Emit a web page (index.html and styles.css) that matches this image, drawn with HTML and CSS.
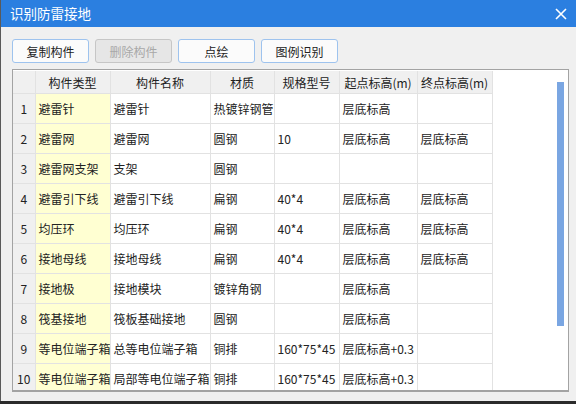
FILE: index.html
```html
<!DOCTYPE html>
<html lang="zh-CN">
<head>
  <meta charset="UTF-8">
  <title>识别防雷接地</title>
  <link rel="stylesheet" href="styles.css">
</head>
<body>
  <div class="dialog">
    <div class="titlebar">
      <span class="title">识别防雷接地</span>
      <svg class="close" width="12" height="12" viewBox="0 0 12 12">
        <path d="M1 1 L11 11 M11 1 L1 11" stroke="#fff" stroke-width="1.6"/>
      </svg>
    </div>

    <div class="content">
      <div class="toolbar">
        <button class="btn">复制构件</button>
        <button class="btn" disabled>删除构件</button>
        <button class="btn">点绘</button>
        <button class="btn">图例识别</button>
      </div>

      <div class="grid-frame">
        <table class="grid">
          <colgroup>
            <col style="width:22px">
            <col style="width:75px">
            <col style="width:100px">
            <col style="width:64px">
            <col style="width:65px">
            <col style="width:78px">
            <col style="width:75px">
          </colgroup>
          <thead>
            <tr>
              <th></th>
              <th>构件类型</th>
              <th>构件名称</th>
              <th>材质</th>
              <th>规格型号</th>
              <th>起点标高(m)</th>
              <th>终点标高(m)</th>
            </tr>
          </thead>
          <tbody>
            <tr><td class="num">1</td><td class="type">避雷针</td><td>避雷针</td><td>热镀锌钢管</td><td></td><td>层底标高</td><td></td></tr>
            <tr><td class="num">2</td><td class="type">避雷网</td><td>避雷网</td><td>圆钢</td><td>10</td><td>层底标高</td><td>层底标高</td></tr>
            <tr><td class="num">3</td><td class="type">避雷网支架</td><td>支架</td><td>圆钢</td><td></td><td></td><td></td></tr>
            <tr><td class="num">4</td><td class="type">避雷引下线</td><td>避雷引下线</td><td>扁钢</td><td>40*4</td><td>层底标高</td><td>层底标高</td></tr>
            <tr><td class="num">5</td><td class="type">均压环</td><td>均压环</td><td>扁钢</td><td>40*4</td><td>层底标高</td><td>层底标高</td></tr>
            <tr><td class="num">6</td><td class="type">接地母线</td><td>接地母线</td><td>扁钢</td><td>40*4</td><td>层底标高</td><td>层底标高</td></tr>
            <tr><td class="num">7</td><td class="type">接地极</td><td>接地模块</td><td>镀锌角钢</td><td></td><td>层底标高</td><td></td></tr>
            <tr><td class="num">8</td><td class="type">筏基接地</td><td>筏板基础接地</td><td>圆钢</td><td></td><td>层底标高</td><td></td></tr>
            <tr><td class="num">9</td><td class="type">等电位端子箱</td><td>总等电位端子箱</td><td>铜排</td><td>160*75*45</td><td>层底标高+0.3</td><td></td></tr>
            <tr><td class="num">10</td><td class="type">等电位端子箱</td><td>局部等电位端子箱</td><td>铜排</td><td>160*75*45</td><td>层底标高+0.3</td><td></td></tr>
          </tbody>
        </table>
        <div class="scroll-thumb"></div>
      </div>
    </div>
  </div>
</body>
</html>
```

FILE: styles.css
```css
body {
  margin: 0;
  background-color: #2b2b2b;
  font-family: "Noto Sans CJK SC", "Noto Sans", sans-serif;
  font-size: 12px;
  color: #222;
}
.dialog {
  width: 575px;
  height: 401px;
  background-color: #f0f0f0;
  border-left: 1px solid #5a5a5a;
  display: flex;
  flex-direction: column;
  overflow: hidden;
}
.titlebar {
  height: 27px;
  flex: none;
  background-color: #2b7fe0;
  display: flex;
  align-items: center;
  justify-content: space-between;
  padding: 0 8px 0 9px;
}
.title {
  color: #fff;
  font-size: 13.5px;
  line-height: 27px;
}
.close {
  margin-right: 1px;
}
.content {
  padding: 12px 7px 0 11px;
}
.toolbar {
  display: flex;
  gap: 6px;
  height: 24px;
}
.btn {
  width: 77px;
  height: 24px;
  padding: 0;
  font-family: inherit;
  font-size: 12px;
  color: #222;
  background-color: #fbfbfb;
  border: 1px solid #9ec3ee;
  border-radius: 3px;
}
.btn:disabled {
  color: #a8a8a8;
  background-color: #e6e6e6;
  border-color: #c6c6c6;
}
.grid-frame {
  position: relative;
  margin-top: 6px;
  height: 319px;
  background-color: #fff;
  border: 1px solid #a3a3a3;
  border-bottom-width: 2px;
  padding-top: 1px;
  overflow: hidden;
}
.grid {
  border-collapse: collapse;
  table-layout: fixed;
  width: 479px;
}
.grid th {
  height: 22px;
  padding: 0;
  font-weight: normal;
  background-color: #f0f0f0;
  border-right: 1px solid #e2e2e2;
  border-bottom: 1px solid #e2e2e2;
  text-align: center;
  white-space: nowrap;
}
.grid td {
  height: 29px;
  padding: 0 0 0 3px;
  border-right: 1px solid #e2e2e2;
  border-bottom: 1px solid #e2e2e2;
  white-space: nowrap;
  overflow: hidden;
}
.grid td.num {
  padding: 0;
  text-align: center;
  background-color: #f0f0f0;
}
.grid td.type {
  background-color: #ffffd2;
}
.scroll-thumb {
  position: absolute;
  left: 544px;
  top: 12px;
  width: 7px;
  height: 244px;
  background-color: #7aa6e2;
}
```
